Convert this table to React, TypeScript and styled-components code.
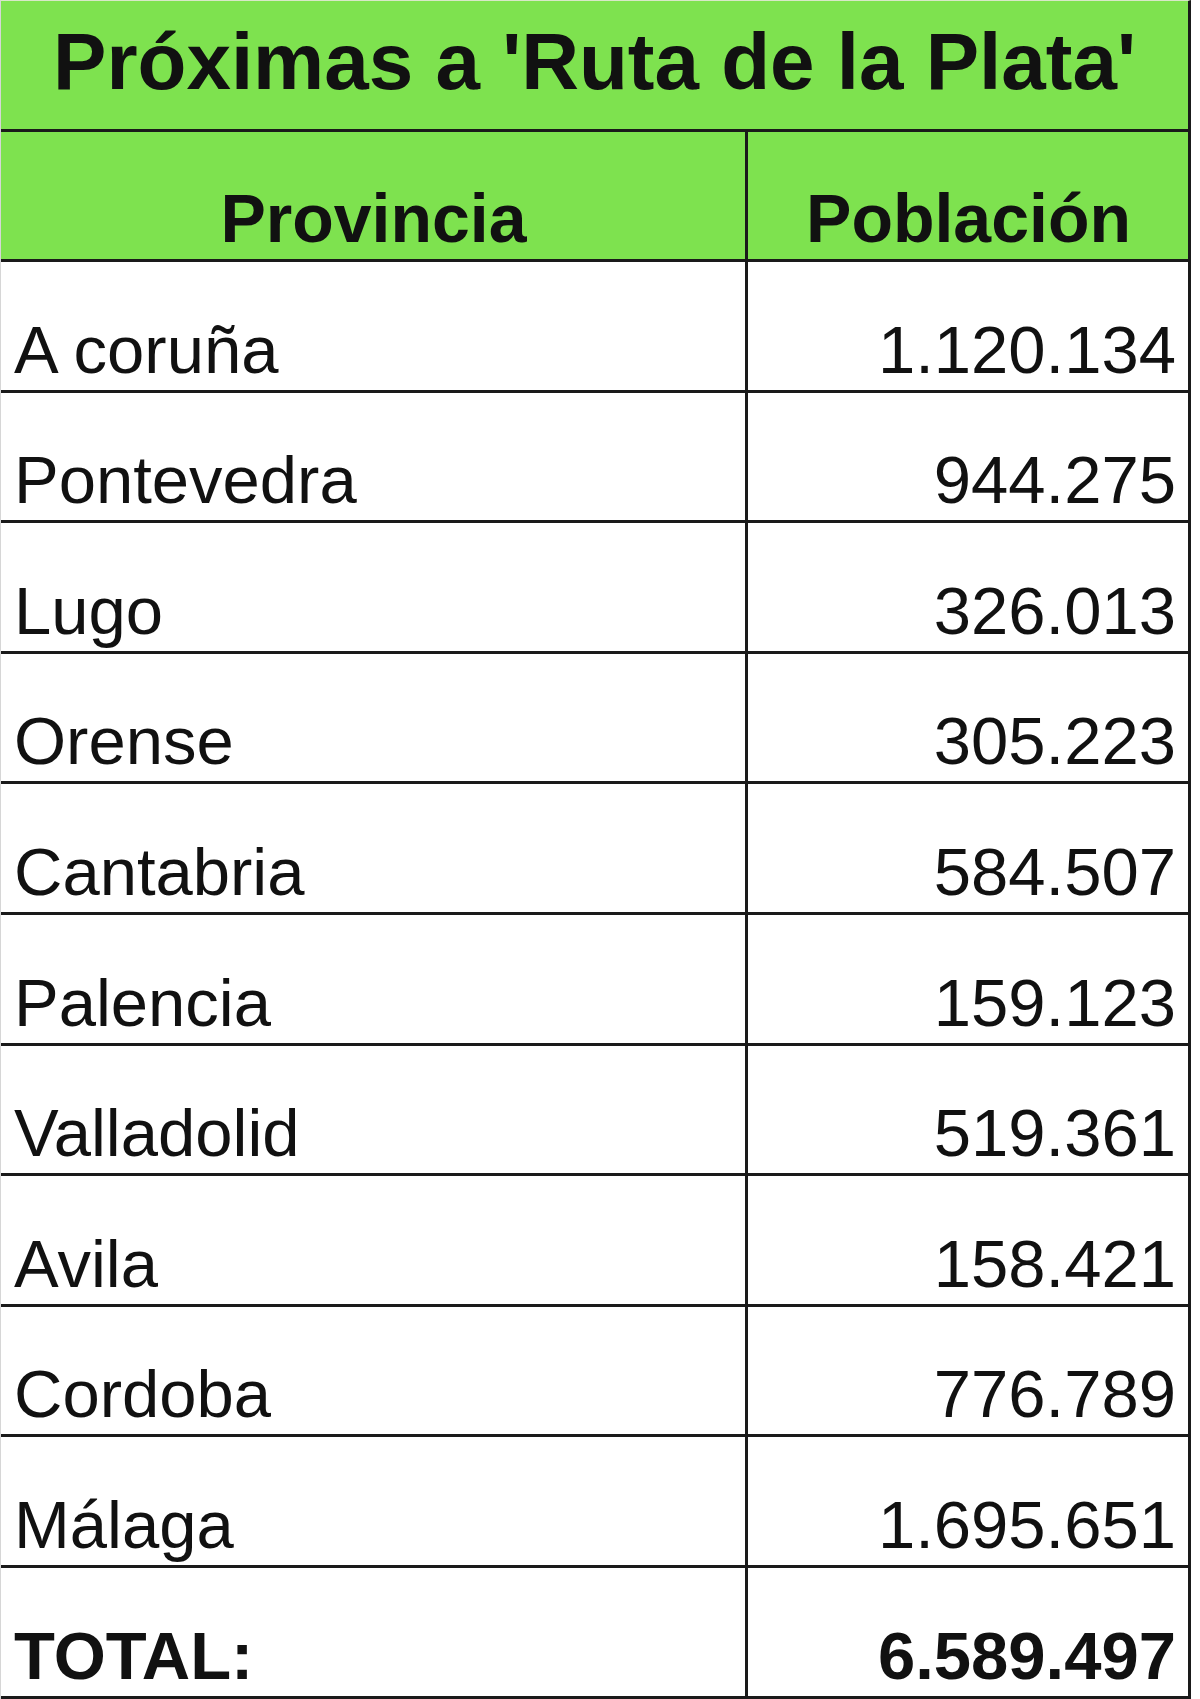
import React from 'react';
import styled, { createGlobalStyle } from 'styled-components';

const GlobalStyle = createGlobalStyle`
  body {
    margin: 0;
    background: #ffffff;
    font-family: "Liberation Sans", Arial, sans-serif;
    color: #111111;
  }
`;

const Sheet = styled.div`
  width: 1191px;
  box-sizing: border-box;
  border-right: 3px solid #1a1a1a;
  border-left: 1px solid #d6d6d6;
  border-top: 1px solid #d8e8c8;
`;

const Title = styled.div`
  height: 131px;
  box-sizing: border-box;
  background: #7ee24f;
  border-bottom: 3px solid #1a1a1a;
  display: flex;
  align-items: center;
  justify-content: center;
  font-size: 80px;
  font-weight: 700;
  padding-bottom: 6px;
`;

const Grid = styled.div`
  display: grid;
  grid-template-columns: 747px 1fr;
  grid-template-rows: 130px;
  grid-auto-rows: 130.6px;
`;

const Cell = styled.div<{ $head?: boolean; $align: 'left' | 'center' | 'right'; $bold?: boolean; $first?: boolean }>`
  box-sizing: border-box;
  display: flex;
  align-items: flex-end;
  justify-content: ${(p) => (p.$align === 'left' ? 'flex-start' : p.$align === 'right' ? 'flex-end' : 'center')};
  background: ${(p) => (p.$head ? '#7ee24f' : '#ffffff')};
  border-bottom: 3px solid #1a1a1a;
  border-right: ${(p) => (p.$first ? '3px solid #1a1a1a' : 'none')};
  padding: 0 12px 7px 13px;
  font-size: ${(p) => (p.$head ? '68px' : '67px')};
  font-weight: ${(p) => (p.$bold ? 700 : 400)};
  line-height: 1;
  white-space: nowrap;
`;

const rows: [string, string][] = [
  ['A coruña', '1.120.134'],
  ['Pontevedra', '944.275'],
  ['Lugo', '326.013'],
  ['Orense', '305.223'],
  ['Cantabria', '584.507'],
  ['Palencia', '159.123'],
  ['Valladolid', '519.361'],
  ['Avila', '158.421'],
  ['Cordoba', '776.789'],
  ['Málaga', '1.695.651'],
];

export default function App() {
  return (
    <>
      <GlobalStyle />
      <Sheet>
        <Title>Próximas a 'Ruta de la Plata'</Title>
        <Grid>
          <Cell $head $bold $first $align="center">Provincia</Cell>
          <Cell $head $bold $align="center">Población</Cell>
          {rows.map(([name, value]) => (
            <React.Fragment key={name}>
              <Cell $first $align="left">{name}</Cell>
              <Cell $align="right">{value}</Cell>
            </React.Fragment>
          ))}
          <Cell $first $bold $align="left">TOTAL:</Cell>
          <Cell $bold $align="right">6.589.497</Cell>
        </Grid>
      </Sheet>
    </>
  );
}
